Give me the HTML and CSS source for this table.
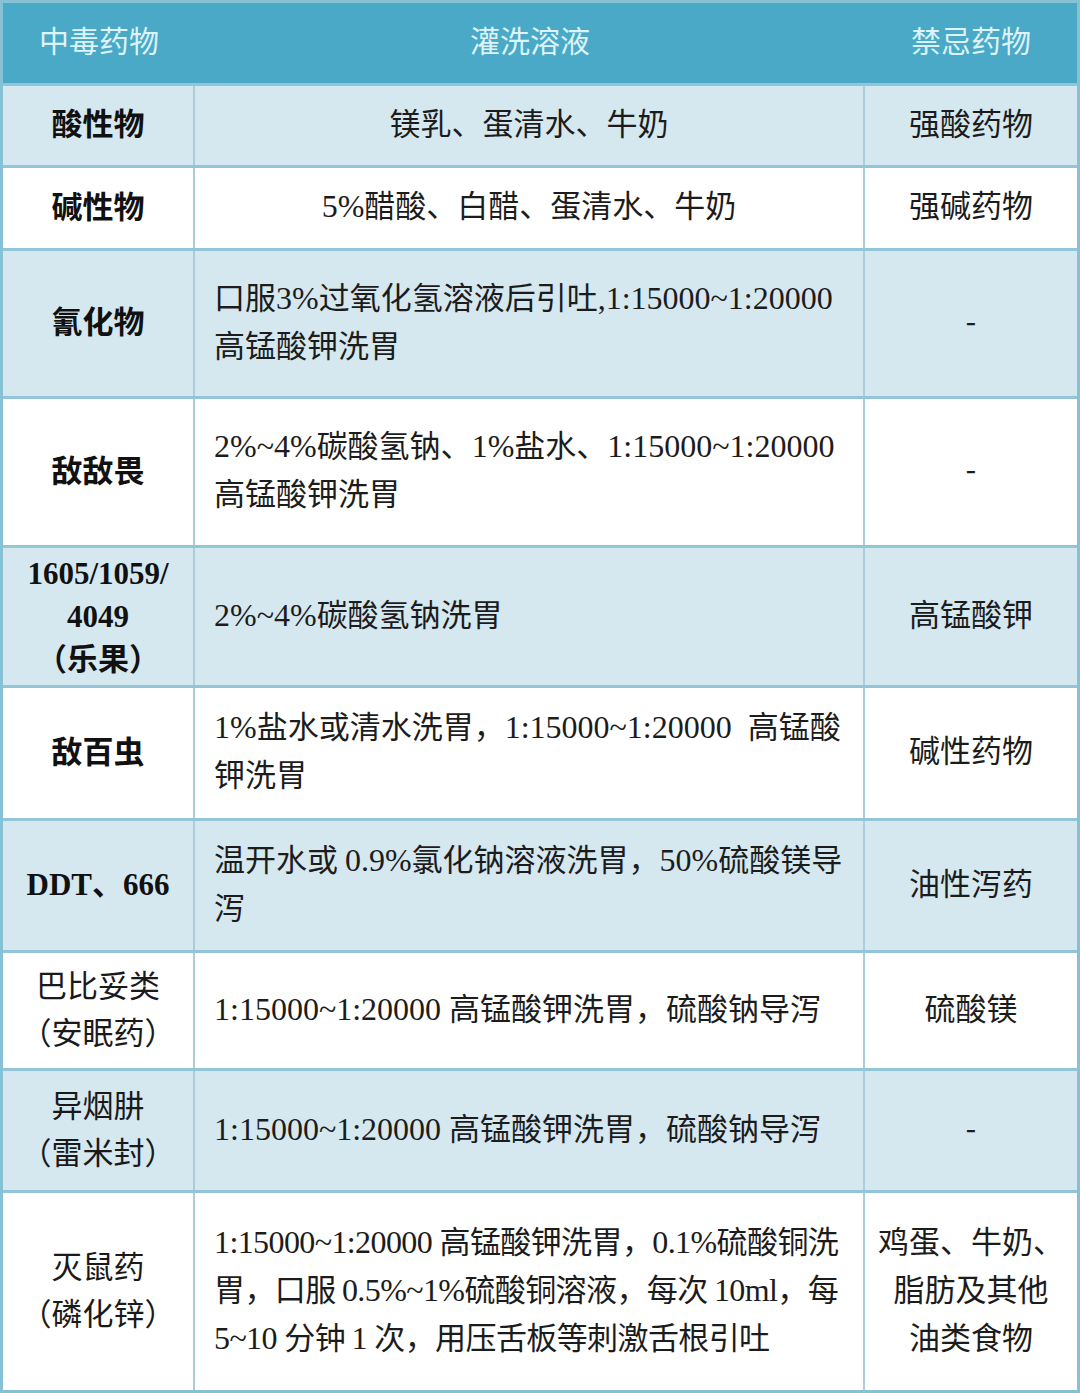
FILE: index.html
```html
<!DOCTYPE html>
<html lang="zh-CN">
<head>
<meta charset="utf-8">
<title>中毒药物灌洗溶液</title>
<link rel="stylesheet" href="styles.css">
</head>
<body>
<div class="table">
  <div class="row head">
    <div class="cell"><div class="txt">中毒药物</div></div>
    <div class="cell"><div class="txt">灌洗溶液</div></div>
    <div class="cell"><div class="txt">禁忌药物</div></div>
  </div>
  <div class="row shade h82">
    <div class="cell name"><div class="txt">酸性物</div></div>
    <div class="cell sol center"><div class="txt">镁乳、蛋清水、牛奶</div></div>
    <div class="cell ban"><div class="txt">强酸药物</div></div>
  </div>
  <div class="row h83">
    <div class="cell name"><div class="txt">碱性物</div></div>
    <div class="cell sol center"><div class="txt"><span class="en">5%</span>醋酸、白醋、蛋清水、牛奶</div></div>
    <div class="cell ban"><div class="txt">强碱药物</div></div>
  </div>
  <div class="row shade h148">
    <div class="cell name"><div class="txt">氰化物</div></div>
    <div class="cell sol"><div class="txt">口服<span class="en">3%</span>过氧化氢溶液后引吐<span class="en">,1:15000~1:20000</span><br>高锰酸钾洗胃</div></div>
    <div class="cell ban"><div class="txt">-</div></div>
  </div>
  <div class="row h149">
    <div class="cell name"><div class="txt">敌敌畏</div></div>
    <div class="cell sol"><div class="txt"><span class="en">2%~4%</span>碳酸氢钠、<span class="en">1%</span>盐水、<span class="en">1:15000~1:20000</span><br>高锰酸钾洗胃</div></div>
    <div class="cell ban"><div class="txt">-</div></div>
  </div>
  <div class="row shade h140">
    <div class="cell name tight"><div class="txt"><span class="en">1605/1059/</span><br><span class="en">4049</span><br>（乐果）</div></div>
    <div class="cell sol"><div class="txt"><span class="en">2%~4%</span>碳酸氢钠洗胃</div></div>
    <div class="cell ban"><div class="txt">高锰酸钾</div></div>
  </div>
  <div class="row h133">
    <div class="cell name"><div class="txt">敌百虫</div></div>
    <div class="cell sol"><div class="txt"><span class="en">1%</span>盐水或清水洗胃，<span class="en">1:15000~1:20000&nbsp; </span>高锰酸<br>钾洗胃</div></div>
    <div class="cell ban"><div class="txt">碱性药物</div></div>
  </div>
  <div class="row shade h132">
    <div class="cell name"><div class="txt"><span class="en">DDT</span>、<span class="en">666</span></div></div>
    <div class="cell sol"><div class="txt">温开水或 <span class="en">0.9%</span>氯化钠溶液洗胃，<span class="en">50%</span>硫酸镁导<br>泻</div></div>
    <div class="cell ban"><div class="txt">油性泻药</div></div>
  </div>
  <div class="row h118">
    <div class="cell name light"><div class="txt">巴比妥类<br>（安眠药）</div></div>
    <div class="cell sol"><div class="txt"><span class="en">1:15000~1:20000 </span>高锰酸钾洗胃，硫酸钠导泻</div></div>
    <div class="cell ban"><div class="txt">硫酸镁</div></div>
  </div>
  <div class="row shade h122">
    <div class="cell name light"><div class="txt">异烟肼<br>（雷米封）</div></div>
    <div class="cell sol"><div class="txt"><span class="en">1:15000~1:20000 </span>高锰酸钾洗胃，硫酸钠导泻</div></div>
    <div class="cell ban"><div class="txt">-</div></div>
  </div>
  <div class="row h197">
    <div class="cell name light"><div class="txt">灭鼠药<br>（磷化锌）</div></div>
    <div class="cell sol dense"><div class="txt"><span class="en">1:15000~1:20000 </span>高锰酸钾洗胃，<span class="en">0.1%</span>硫酸铜洗<br>胃，口服 <span class="en">0.5%~1%</span>硫酸铜溶液，每次 <span class="en">10ml</span>，每<br><span class="en">5~10 </span>分钟 <span class="en">1 </span>次，用压舌板等刺激舌根引吐</div></div>
    <div class="cell ban"><div class="txt">鸡蛋、牛奶、<br>脂肪及其他<br>油类食物</div></div>
  </div>
</div>
</body>
</html>
```

FILE: styles.css
```css
html, body {
  margin: 0;
  padding: 0;
  background: #ffffff;
}

.table {
  width: 1080px;
  height: 1393px;
  box-sizing: border-box;
  border: 3px solid #86c1d6;
  font-family: "Noto Sans CJK SC", "Noto Sans", sans-serif;
  color: #161616;
  background: #ffffff;
}

.row {
  display: grid;
  grid-template-columns: 192px 670px 212px;
  box-sizing: border-box;
  border-bottom: 3px solid #92c5d8;
}

.row:last-child {
  border-bottom: 0;
}

.shade {
  background: #d5e8f0;
}

.head {
  height: 83px;
  background: #4aa9c7;
  color: #dcf3f7;
  border-bottom-color: #8ec6da;
}

.h82 { height: 82px; }
.h83 { height: 83px; }
.h148 { height: 148px; }
.h149 { height: 149px; }
.h140 { height: 140px; }
.h133 { height: 133px; }
.h132 { height: 132px; }
.h118 { height: 118px; }
.h122 { height: 122px; }
.h197 { height: 197px; }

.cell {
  box-sizing: border-box;
  display: flex;
  align-items: center;
  justify-content: center;
  border-right: 2px solid #abcdd9;
  font-size: 31px;
  line-height: 48px;
  padding-bottom: 8px;
  text-align: center;
}

.cell:last-child {
  border-right: 0;
}

.head .cell {
  border-right: 0;
  font-size: 30px;
  padding-bottom: 8px;
}

.name {
  font-weight: 700;
  line-height: 47px;
  color: #111;
}

.name.tight {
  line-height: 43px;
  padding-bottom: 6px;
}

.name .en {
  font-size: 31px;
}

.name.light {
  font-weight: 400;
  color: #1a1a1a;
}

.sol {
  justify-content: flex-start;
  text-align: left;
  padding-left: 19px;
  padding-right: 2px;
  white-space: nowrap;
  color: #1c1c1c;
}

.sol.center {
  justify-content: center;
  text-align: center;
  padding-left: 0;
  padding-right: 0;
}

.sol.dense {
  letter-spacing: -0.6px;
}

.en {
  font-family: "Liberation Serif", serif;
  font-size: 32px;
  line-height: 30px;
}

.ban {
  color: #1c1c1c;
}
```
